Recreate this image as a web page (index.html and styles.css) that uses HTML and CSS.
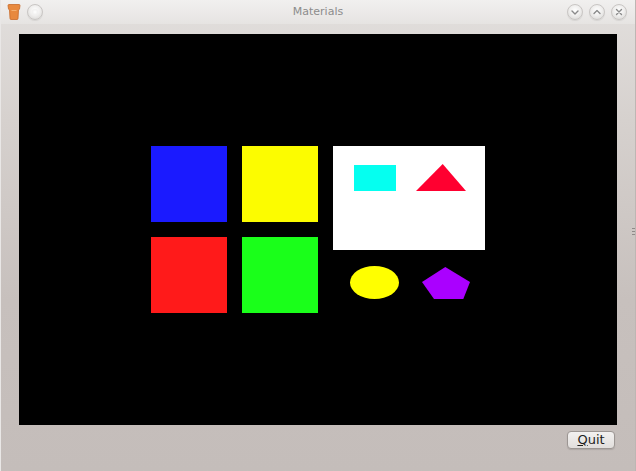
FILE: index.html
```html
<!DOCTYPE html>
<html>
<head>
<meta charset="utf-8">
<link rel="stylesheet" href="styles.css">
</head>
<body>
<div class="window">
  <div class="titlebar">
    <div class="tb-left">
      <svg class="app-icon" width="14" height="16" viewBox="0 0 14 16">
        <path d="M1 1.5 Q1 0.5 2 0.5 L12 0.5 Q13 0.5 13 1.5 L12.5 5 L11.5 6 L11 14.5 Q11 15.5 10 15.5 L4 15.5 Q3 15.5 3 14.5 L2.5 6 L1.5 5 Z" fill="#e8893e" stroke="#c86a28" stroke-width="0.8"/>
        <path d="M4.5 6.5 L9.5 6.5" stroke="#f5b070" stroke-width="1"/>
      </svg>
      <span class="circle-btn"><span class="dot"></span></span>
    </div>
    <div class="title">Materials</div>
    <div class="tb-right">
      <span class="circle-btn">
        <svg width="16" height="16" viewBox="0 0 16 16"><path d="M5 7 L8 10 L11 7" fill="none" stroke="#8a8a8a" stroke-width="1.4" stroke-linecap="round" stroke-linejoin="round"/></svg>
      </span>
      <span class="circle-btn">
        <svg width="16" height="16" viewBox="0 0 16 16"><path d="M5 9.5 L8 6.5 L11 9.5" fill="none" stroke="#8a8a8a" stroke-width="1.4" stroke-linecap="round" stroke-linejoin="round"/></svg>
      </span>
      <span class="circle-btn">
        <svg width="16" height="16" viewBox="0 0 16 16"><path d="M5.5 5.5 L10.5 10.5 M10.5 5.5 L5.5 10.5" fill="none" stroke="#8a8a8a" stroke-width="1.4" stroke-linecap="round"/></svg>
      </span>
    </div>
  </div>
  <div class="content">
    <div class="canvas">
      <svg width="598" height="391" viewBox="0 0 598 391">
        <g shape-rendering="crispEdges">
          <rect x="132" y="112" width="76" height="76" fill="#1a1aff"/>
          <rect x="223" y="112" width="76" height="76" fill="#fcfc00"/>
          <rect x="132" y="203" width="76" height="76" fill="#ff1a1a"/>
          <rect x="223" y="203" width="76" height="76" fill="#1aff1a"/>
          <rect x="314" y="112" width="152" height="104" fill="#ffffff"/>
          <rect x="335" y="131" width="42" height="26" fill="#05fff0"/>
        </g>
        <polygon points="423.7,130 397,157 447,157" fill="#ff0030"/>
        <ellipse cx="355.5" cy="248.5" rx="24.5" ry="16.5" fill="#ffff00"/>
        <polygon points="426.3,233 451,248 444.3,265 415,265 403,248" fill="#aa00ff"/>
      </svg>
    </div>
    <div class="actions">
      <button class="btn"><span class="u">Q</span>uit</button>
    </div>
  </div>
  <div class="grip-side"></div>
</div>
</body>
</html>
```

FILE: styles.css
```css
* { box-sizing: border-box; }
html, body {
  margin: 0;
  padding: 0;
  width: 636px;
  height: 471px;
  overflow: hidden;
}
body {
  font-family: "DejaVu Sans", sans-serif;
}
.window {
  position: relative;
  width: 636px;
  height: 471px;
  display: flex;
  flex-direction: column;
  background: linear-gradient(to bottom, #e2dfdd 0px, #d6d1ce 120px, #c7c0bd 300px, #c4bdba 471px);
  border-left: 1px solid #e9e7e6;
  border-right: 1px solid #bdb6b3;
}
.titlebar {
  height: 24px;
  flex: none;
  display: flex;
  align-items: center;
  justify-content: space-between;
  padding: 0 8px 0 6px;
  background: linear-gradient(to bottom, #f1f0ef, #e6e4e2);
  position: relative;
}
.tb-left, .tb-right {
  display: flex;
  align-items: center;
  gap: 6px;
  width: 70px;
}
.tb-right {
  justify-content: flex-end;
  gap: 6px;
}
.app-icon { display: block; }
.title {
  position: absolute;
  left: 0;
  right: 0;
  top: 0;
  height: 24px;
  line-height: 24px;
  text-align: center;
  font-size: 11px;
  color: #8c8c8c;
  pointer-events: none;
}
.circle-btn {
  width: 16px;
  height: 16px;
  border-radius: 50%;
  background: radial-gradient(circle at 50% 40%, #ffffff 0%, #f0efee 45%, #d5d3d1 100%);
  border: 1px solid #c9c6c4;
  box-shadow: 0 1px 1px rgba(0,0,0,0.08);
  display: flex;
  align-items: center;
  justify-content: center;
  position: relative;
}
.circle-btn svg {
  position: absolute;
  left: -1px;
  top: -1px;
}
.dot {
  width: 6px;
  height: 6px;
  border-radius: 50%;
  background: radial-gradient(circle at 50% 50%, #ffffff, #e9e8e7);
}
.content {
  flex: 1;
  display: flex;
  flex-direction: column;
  padding: 10px 18px 0 18px;
}
.canvas {
  width: 598px;
  height: 391px;
  background: #000;
}
.canvas svg { display: block; }
.actions {
  display: flex;
  justify-content: flex-end;
  padding-top: 6px;
  padding-right: 2px;
}
.btn {
  width: 48px;
  height: 18px;
  padding: 0;
  border: 1px solid #9c9693;
  border-radius: 4px;
  background: linear-gradient(to bottom, #f3f1f0, #e1dedc);
  box-shadow: 0 1px 1px rgba(0,0,0,0.12);
  font-family: "DejaVu Sans", sans-serif;
  font-size: 13px;
  line-height: 16px;
  color: #1e1e1e;
}
.u { text-decoration: underline; }
.grip-side {
  position: absolute;
  right: 0;
  top: 228px;
  width: 3px;
  height: 9px;
  background: repeating-linear-gradient(to bottom, #8f8a88 0 1px, transparent 1px 3px);
}
```
